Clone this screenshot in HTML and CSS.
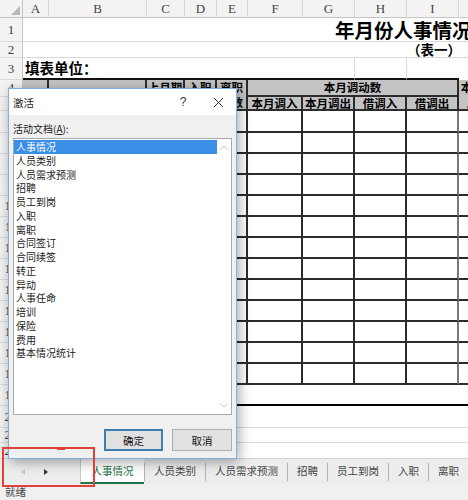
FILE: index.html
```html
<!DOCTYPE html>
<html lang="zh-CN">
<head>
<meta charset="utf-8">
<title>年月份人事情况</title>
<link rel="stylesheet" href="styles.css">
</head>
<body>
<div class="app">
  <div class="sheet">
    <div class="row colhdr">
      <span class="corner"><svg width="9" height="9" viewBox="0 0 9 9"><polygon points="9,0 9,9 0,9" fill="#b8b8b8"/></svg></span>
      <span>A</span><span>B</span><span>C</span><span>D</span><span>E</span><span>F</span><span>G</span><span>H</span><span>I</span><span>J</span>
    </div>
    <div class="row r1"><span class="rh">1</span><span class="title">年月份人事情况统计表</span></div>
    <div class="row r2"><span class="rh">2</span><span class="subtitle">（表一）</span></div>
    <div class="row r3"><span class="rh">3</span><span class="unit">填表单位：</span><span class="c3"></span><span class="c3 last"></span></div>
    <div class="thead">
      <span class="rh rh4">4</span>
      <span class="rh rh5">5</span>
      <span class="h span2 ca"></span>
      <span class="h span2 cb"></span>
      <span class="h span2 cc">上月期末人数</span>
      <span class="h span2 cd">入职人数</span>
      <span class="h span2 ce">离职人数</span>
      <span class="h group">本月调动数</span>
      <span class="h sub cf">本月调入</span>
      <span class="h sub cg">本月调出</span>
      <span class="h sub ch">借调入</span>
      <span class="h sub ci">借调出</span>
      <span class="h span2 cj">本月末人数</span>
    </div>
    <div class="row d first"><span class="rh">6</span><span></span><span></span><span></span><span></span><span></span><span></span><span></span><span></span><span class="soft"></span><span class="soft"></span></div>
    <div class="row d"><span class="rh">7</span><span></span><span></span><span></span><span></span><span></span><span></span><span></span><span></span><span class="soft"></span><span class="soft"></span></div>
    <div class="row d"><span class="rh">8</span><span></span><span></span><span></span><span></span><span></span><span></span><span></span><span></span><span class="soft"></span><span class="soft"></span></div>
    <div class="row d"><span class="rh">9</span><span></span><span></span><span></span><span></span><span></span><span></span><span></span><span></span><span class="soft"></span><span class="soft"></span></div>
    <div class="row d"><span class="rh">10</span><span></span><span></span><span></span><span></span><span></span><span></span><span></span><span></span><span class="soft"></span><span class="soft"></span></div>
    <div class="row d"><span class="rh">11</span><span></span><span></span><span></span><span></span><span></span><span></span><span></span><span></span><span class="soft"></span><span class="soft"></span></div>
    <div class="row d"><span class="rh">12</span><span></span><span></span><span></span><span></span><span></span><span></span><span></span><span></span><span class="soft"></span><span class="soft"></span></div>
    <div class="row d"><span class="rh">13</span><span></span><span></span><span></span><span></span><span></span><span></span><span></span><span></span><span class="soft"></span><span class="soft"></span></div>
    <div class="row d"><span class="rh">14</span><span></span><span></span><span></span><span></span><span></span><span></span><span></span><span></span><span class="soft"></span><span class="soft"></span></div>
    <div class="row d"><span class="rh">15</span><span></span><span></span><span></span><span></span><span></span><span></span><span></span><span></span><span class="soft"></span><span class="soft"></span></div>
    <div class="row d"><span class="rh">16</span><span></span><span></span><span></span><span></span><span></span><span></span><span></span><span></span><span class="soft"></span><span class="soft"></span></div>
    <div class="row d"><span class="rh">17</span><span></span><span></span><span></span><span></span><span></span><span></span><span></span><span></span><span class="soft"></span><span class="soft"></span></div>
    <div class="row d"><span class="rh">18</span><span></span><span></span><span></span><span></span><span></span><span></span><span></span><span></span><span class="soft"></span><span class="soft"></span></div>
    <div class="row foot"><span class="rh">19</span><span class="wide thick"></span></div>
    <div class="row r20"><span class="rh">20</span><span class="wide"></span></div>
    <div class="row r21"><span class="rh">21</span><span class="wide"></span></div>
    <div class="row r22"><span class="rh">22</span><span class="wide"></span></div>
  </div>

  <div class="tabbar">
    <div class="tabnav">
      <span class="arr arr-left"></span>
      <span class="arr arr-right"></span>
    </div>
    <span class="tab active">人事情况</span><i class="sep"></i>
    <span class="tab">人员类别</span><i class="sep"></i>
    <span class="tab">人员需求预测</span><i class="sep"></i>
    <span class="tab">招聘</span><i class="sep"></i>
    <span class="tab">员工到岗</span><i class="sep"></i>
    <span class="tab">入职</span><i class="sep"></i>
    <span class="tab">离职</span>
  </div>
  <div class="statusbar">就绪</div>

  <div class="dialog">
    <div class="dlg-title">
      <span class="dlg-name">激活</span>
      <span class="dlg-help">?</span>
      <span class="dlg-close"><svg width="11" height="11" viewBox="0 0 11 11"><path d="M1 1L10 10M10 1L1 10" stroke="#333" stroke-width="1"/></svg></span>
    </div>
    <div class="dlg-body">
      <div class="dlg-label">活动文档(<u>A</u>):</div>
      <div class="listbox">
        <ul class="items">
          <li class="selected">人事情况</li>
          <li>人员类别</li>
          <li>人员需求预测</li>
          <li>招聘</li>
          <li>员工到岗</li>
          <li>入职</li>
          <li>离职</li>
          <li>合同签订</li>
          <li>合同续签</li>
          <li>转正</li>
          <li>异动</li>
          <li>人事任命</li>
          <li>培训</li>
          <li>保险</li>
          <li>费用</li>
          <li>基本情况统计</li>
        </ul>
        <div class="vscroll">
          <svg width="8" height="5" viewBox="0 0 8 5"><path d="M0.5 4.5L4 1L7.5 4.5" fill="none" stroke="#c4c4c4" stroke-width="1"/></svg>
          <svg width="8" height="5" viewBox="0 0 8 5"><path d="M0.5 0.5L4 4L7.5 0.5" fill="none" stroke="#c4c4c4" stroke-width="1"/></svg>
        </div>
      </div>
      <div class="dlg-buttons">
        <button class="btn primary">确定</button>
        <button class="btn">取消</button>
      </div>
    </div>
  </div>

  <div class="callout"></div>
  <div class="callout-mark"></div>
</div>
</body>
</html>
```

FILE: styles.css
```css
:root {
  --cols: 23px 26px 98px 38px 32px 31px 55px 52px 52px 52px 40px;
  --line: #2b2b2b;
  --grid: #d9d9d9;
  --hdr: #f3f3f3;
  --cjk: "Noto Sans CJK SC", "Noto Sans", sans-serif;
}

* {
  box-sizing: border-box;
  margin: 0;
  padding: 0;
}

body {
  margin: 0;
  width: 468px;
  height: 500px;
  overflow: hidden;
  background: #fff;
  font-family: var(--cjk);
  color: #000;
}

.app {
  position: relative;
  width: 468px;
  height: 500px;
  overflow: hidden;
  background: #f0f0f0;
}

/* ---------- sheet ---------- */
.sheet {
  width: 468px;
  height: 459px;
  overflow: hidden;
  background: #fff;
  border-bottom: 1px solid #d4d4d4;
}

.row {
  display: grid;
  grid-template-columns: var(--cols);
}

.colhdr {
  height: 18px;
}

.colhdr span {
  background: var(--hdr);
  border-right: 1px solid #d6d6d6;
  border-bottom: 1px solid #c4c4c4;
  font-family: "Liberation Serif", serif;
  font-size: 13px;
  line-height: 17px;
  text-align: center;
  color: #444;
}

.colhdr .corner {
  display: flex;
  align-items: flex-end;
  justify-content: flex-end;
  padding: 0 2px 2px 0;
  border-right-color: #c4c4c4;
}

.rh {
  background: var(--hdr);
  border-right: 1px solid #c4c4c4;
  border-bottom: 1px solid #d9d9d9;
  font-family: "Liberation Serif", serif;
  font-size: 13px;
  text-align: center;
  color: #444;
  display: flex;
  align-items: center;
  justify-content: center;
  overflow: hidden;
}

.r1 { height: 24px; }
.r2 { height: 16px; }
.r3 { height: 22px; }

.title {
  grid-column: 2 / -1;
  border-bottom: 1px solid var(--grid);
  padding-left: 312px;
  font-size: 19.5px;
  font-weight: 600;
  line-height: 23px;
  white-space: nowrap;
  overflow: hidden;
}

.subtitle {
  grid-column: 2 / -1;
  border-bottom: 1px solid var(--grid);
  padding-left: 384px;
  font-size: 13.5px;
  font-weight: 600;
  line-height: 15px;
  white-space: nowrap;
  overflow: hidden;
}

.unit {
  grid-column: 2 / 9;
  border-bottom: 2px solid #111;
  border-right: 1px solid var(--grid);
  padding-left: 2px;
  font-size: 14.5px;
  font-weight: 700;
  line-height: 20px;
  white-space: nowrap;
}

.c3 {
  border-bottom: 2px solid #111;
  border-right: 1px solid var(--grid);
}

.c3.last {
  border-right: none;
}

/* ---------- header rows 4-5 ---------- */
.thead {
  display: grid;
  grid-template-columns: var(--cols);
  grid-template-rows: 17px 14px;
}

.rh4 { grid-column: 1; grid-row: 1; }
.rh5 { grid-column: 1; grid-row: 2; }

.h {
  background: #c4c4c4;
  border-right: 2px solid var(--line);
  border-bottom: 2px solid var(--line);
  font-size: 11.5px;
  font-weight: 700;
  line-height: 14.5px;
  text-align: center;
  display: flex;
  align-items: center;
  justify-content: center;
  overflow: hidden;
  white-space: normal;
}

.span2 { grid-row: 1 / 3; }
.ca { grid-column: 2; }
.cb { grid-column: 3; }
.cc { grid-column: 4; }
.cd { grid-column: 5; }
.ce { grid-column: 6; }
.group { grid-column: 7 / 11; grid-row: 1; }
.sub { grid-row: 2; line-height: 12px; white-space: nowrap; }
.cf { grid-column: 7; }
.cg { grid-column: 8; }
.ch { grid-column: 9; }
.ci { grid-column: 10; }
.cj { grid-column: 11; }

/* ---------- data rows ---------- */
.d {
  height: 21px;
}

.d.first {
  height: 22px;
}

.d span:not(.rh) {
  border-right: 2px solid var(--line);
  border-bottom: 2px solid var(--line);
}

.d span.soft {
  border-right-color: #7a7a7a;
}

.foot { height: 21px; }
.r20 { height: 22px; }
.r21 { height: 15px; }
.r22 { height: 16px; }

.wide {
  grid-column: 2 / -1;
  border-bottom: 1px solid var(--grid);
}

.wide.thick {
  border-bottom: 2px solid #000;
}

/* ---------- sheet tabs ---------- */
.tabbar {
  display: flex;
  align-items: stretch;
  height: 25px;
  background: #ededed;
  font-size: 10.5px;
  color: #444;
  white-space: nowrap;
}

.tabnav {
  width: 80px;
  flex: none;
  display: flex;
  align-items: center;
  padding-left: 21px;
  gap: 19px;
}

.arr {
  width: 0;
  height: 0;
  border-top: 3.5px solid transparent;
  border-bottom: 3.5px solid transparent;
}

.arr-left {
  border-right: 4px solid #c8c8c8;
}

.arr-right {
  border-left: 4px solid #333;
}

.tab {
  flex: none;
  padding: 0 9px;
  line-height: 23px;
}

.tab.active {
  background: #fff;
  color: #217346;
  padding: 0 10.5px;
  border-bottom: 2px solid #217346;
  border-left: 1px solid #c8c8c8;
}

.sep {
  flex: none;
  width: 1px;
  height: 18px;
  align-self: center;
  background: #b4b4b4;
}

.statusbar {
  height: 16px;
  padding-left: 5px;
  font-size: 10.5px;
  line-height: 15px;
  color: #444;
  background: #f0f0f0;
}

/* ---------- dialog ---------- */
.dialog {
  position: absolute;
  left: 8px;
  top: 88px;
  width: 229px;
  height: 371px;
  border: 1px solid #7fb0e0;
  background: #f0f0f0;
  box-shadow: 2px 3px 12px rgba(0, 0, 0, 0.35);
  display: flex;
  flex-direction: column;
}

.dlg-title {
  height: 26px;
  flex: none;
  background: #fff;
  display: flex;
  align-items: center;
  padding-left: 4px;
  font-size: 10.5px;
  color: #222;
}

.dlg-name {
  flex: 1;
}

.dlg-help {
  width: 10px;
  margin-right: 25px;
  font-family: "Liberation Sans", sans-serif;
  font-size: 12px;
  color: #333;
  text-align: center;
}

.dlg-close {
  width: 11px;
  height: 11px;
  margin-right: 12px;
  display: flex;
}

.dlg-body {
  flex: 1;
  display: flex;
  flex-direction: column;
  padding: 7px 4px 0 4px;
}

.dlg-label {
  font-size: 10px;
  line-height: 14px;
  color: #222;
}

.dlg-label u {
  text-decoration: underline;
  text-underline-offset: 1px;
}

.listbox {
  margin-top: 2px;
  height: 277px;
  border: 1px solid #a8a8a8;
  background: #fff;
  display: flex;
}

.items {
  list-style: none;
  flex: 1;
  padding-top: 1px;
}

.items li {
  height: 13.75px;
  line-height: 13.75px;
  font-size: 10px;
  padding-left: 2px;
  color: #1a1a1a;
  white-space: nowrap;
}

.items li.selected {
  background: #3a8ee6;
  color: #fff;
}

.vscroll {
  width: 14px;
  flex: none;
  display: flex;
  flex-direction: column;
  justify-content: space-between;
  align-items: center;
  padding: 6px 0 6px;
}

.dlg-buttons {
  display: flex;
  justify-content: flex-end;
  gap: 9px;
  margin-top: 14px;
}

.btn {
  width: 60px;
  height: 22px;
  border: 1px solid #adadad;
  background: #e1e1e1;
  font-family: var(--cjk);
  font-size: 10.5px;
  color: #111;
}

.btn.primary {
  width: 59px;
  border: 2px solid #3c7fb1;
}

/* ---------- red annotation ---------- */
.callout {
  position: absolute;
  left: 2px;
  top: 447px;
  width: 93px;
  height: 40px;
  border: 2px solid #e2403a;
}

.callout-mark {
  position: absolute;
  left: 57px;
  top: 448px;
  width: 8px;
  height: 2px;
  background: #e2403a;
}
```
